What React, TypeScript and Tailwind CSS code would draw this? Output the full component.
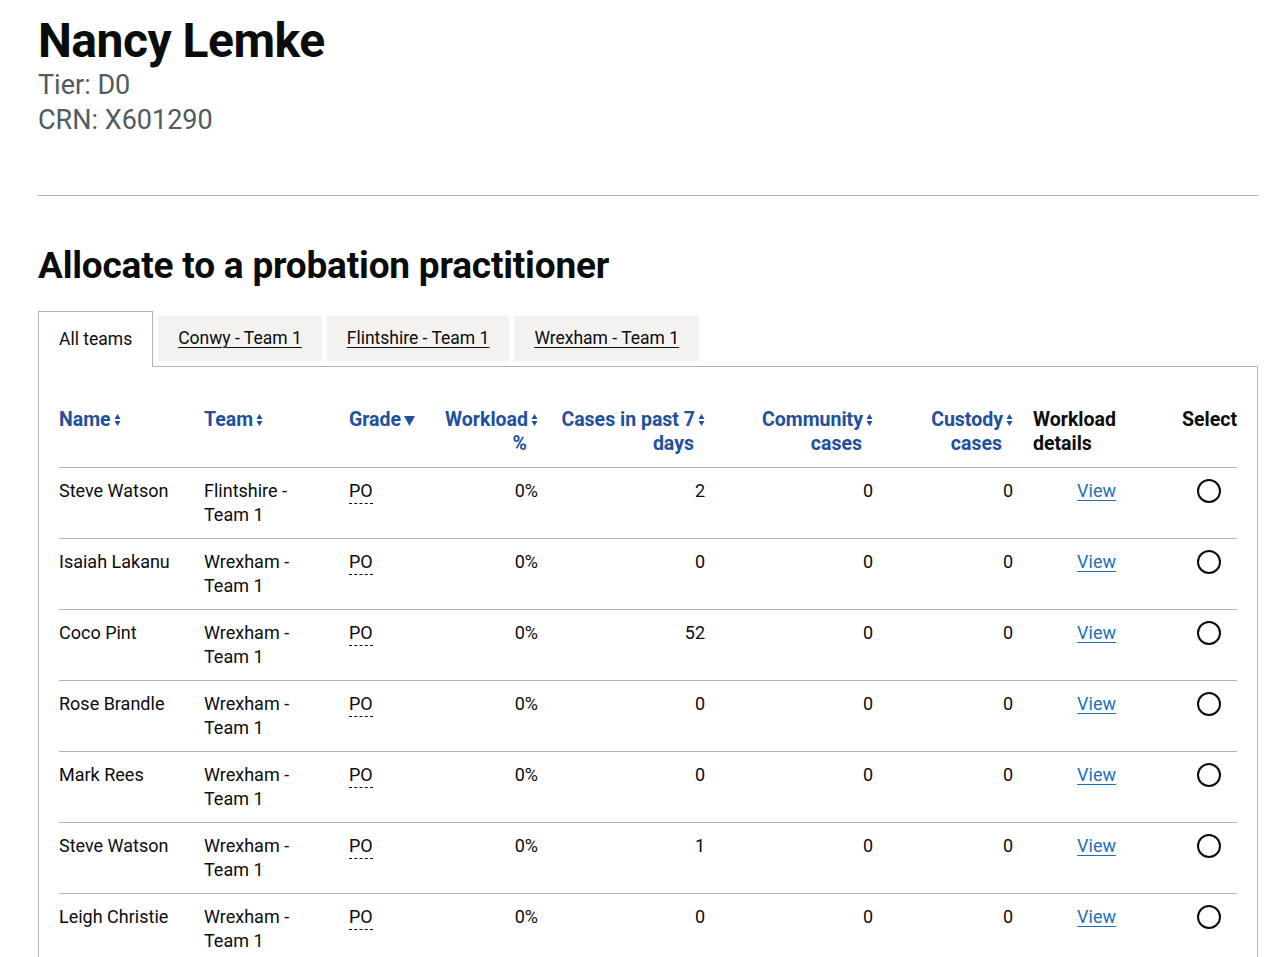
import React from 'react';

type Row = { name: string; team: string; cases: number };

const rows: Row[] = [
  { name: 'Steve Watson', team: 'Flintshire', cases: 2 },
  { name: 'Isaiah Lakanu', team: 'Wrexham', cases: 0 },
  { name: 'Coco Pint', team: 'Wrexham', cases: 52 },
  { name: 'Rose Brandle', team: 'Wrexham', cases: 0 },
  { name: 'Mark Rees', team: 'Wrexham', cases: 0 },
  { name: 'Steve Watson', team: 'Wrexham', cases: 1 },
  { name: 'Leigh Christie', team: 'Wrexham', cases: 0 },
];

const tabs = ['Conwy - Team 1', 'Flintshire - Team 1', 'Wrexham - Team 1'];

const SortArrows = () => (
  <svg className="inline-block ml-[3px] align-[-1px]" width="7" height="14" viewBox="0 0 7 14" fill="currentColor">
    <path d="M3.5 1 L6.5 6 L0.5 6 Z" />
    <path d="M3.5 13 L6.5 8 L0.5 8 Z" />
  </svg>
);

const SortDown = () => (
  <svg className="inline-block ml-[3px] align-[0px]" width="11" height="11" viewBox="0 0 11 11" fill="currentColor">
    <path d="M0 1 L11 1 L5.5 11 Z" />
  </svg>
);

const cell = 'py-[11px] pr-5 align-top border-b border-[#b1b4b6]';
const headCell = 'py-[11px] pr-5 align-top border-b border-[#b1b4b6] font-bold text-[19.5px] text-[#20509e]';

export default function App() {
  return (
    <div
      className="min-h-screen bg-white text-[#0b0c0c] pl-[38px] pr-[18px] pt-[14px]"
      style={{ fontFamily: 'Roboto, "Liberation Sans", sans-serif' }}
    >
      <h1 className="text-[48px] font-bold leading-[54px] tracking-[-0.5px]">Nancy Lemke</h1>
      <div className="text-[#505a5f] text-[27px] leading-[35px]">
        <p>Tier: D0</p>
        <p>CRN: X601290</p>
      </div>

      <hr className="mt-[57px] border-0 border-t border-[#b1b4b6]" />

      <h2 className="mt-[48px] text-[37px] font-bold leading-[44px] tracking-[-0.2px]">
        Allocate to a probation practitioner
      </h2>

      <div className="mt-[23px]">
        <ul className="flex items-start h-[55px] text-[17.5px]">
          <li className="relative z-10 h-[56px] px-5 pt-[14px] bg-white border border-b-0 border-[#b1b4b6] leading-[26px]">
            All teams
          </li>
          {tabs.map((t) => (
            <li key={t} className="ml-[5px] mt-[5px] h-[45px] px-5 pt-[9px] bg-[#f3f2f1] leading-[26px]">
              <a href="#" className="underline underline-offset-[3px] decoration-1">
                {t}
              </a>
            </li>
          ))}
        </ul>

        <div className="border border-[#b1b4b6] px-5 pt-[30px] pb-6">
          <table className="w-full table-fixed border-collapse text-[18px] leading-6">
            <colgroup>
              <col className="w-[145px]" />
              <col className="w-[145px]" />
              <col className="w-[85px]" />
              <col className="w-[124px]" />
              <col className="w-[167px]" />
              <col className="w-[168px]" />
              <col className="w-[140px]" />
              <col className="w-[103px]" />
              <col className="w-[101px]" />
            </colgroup>
            <thead>
              <tr>
                <th className={`${headCell} text-left`}>
                  Name<SortArrows />
                </th>
                <th className={`${headCell} text-left`}>
                  Team<SortArrows />
                </th>
                <th className={`${headCell} text-left whitespace-nowrap`}>
                  Grade<SortDown />
                </th>
                <th className={`${headCell} text-right`}>
                  Workload<SortArrows />
                  <br />
                  <span className="pr-[11px]">%</span>
                </th>
                <th className={`${headCell} text-right`}>
                  Cases in past 7<SortArrows />
                  <br />
                  <span className="pr-[11px]">days</span>
                </th>
                <th className={`${headCell} text-right`}>
                  Community<SortArrows />
                  <br />
                  <span className="pr-[11px]">cases</span>
                </th>
                <th className={`${headCell} text-right`}>
                  Custody<SortArrows />
                  <br />
                  <span className="pr-[11px]">cases</span>
                </th>
                <th className="py-[11px] pr-5 align-top border-b border-[#b1b4b6] font-bold text-[19.5px] text-left">
                  Workload
                  <br />
                  details
                </th>
                <th className="py-[11px] align-top border-b border-[#b1b4b6] font-bold text-[19.5px] text-right">
                  Select
                </th>
              </tr>
            </thead>
            <tbody>
              {rows.map((r, i) => (
                <tr key={i}>
                  <td className={cell}>{r.name}</td>
                  <td className={cell}>
                    {r.team} -
                    <br />
                    Team 1
                  </td>
                  <td className={cell}>
                    <abbr title="Probation Officer" className="no-underline border-b border-dashed border-[#0b0c0c] pb-[2px]">
                      PO
                    </abbr>
                  </td>
                  <td className={`${cell} text-right`}>0%</td>
                  <td className={`${cell} text-right`}>{r.cases}</td>
                  <td className={`${cell} text-right`}>0</td>
                  <td className={`${cell} text-right`}>0</td>
                  <td className={`${cell} text-right`}>
                    <a href="#" className="text-[#1d70b8] underline underline-offset-[3px] decoration-1">
                      View
                    </a>
                  </td>
                  <td className="py-[11px] align-top border-b border-[#b1b4b6]">
                    <div className="flex justify-end pr-4">
                      <span className="block w-6 h-6 rounded-full border-2 border-[#0b0c0c]" />
                    </div>
                  </td>
                </tr>
              ))}
            </tbody>
          </table>
        </div>
      </div>
    </div>
  );
}
